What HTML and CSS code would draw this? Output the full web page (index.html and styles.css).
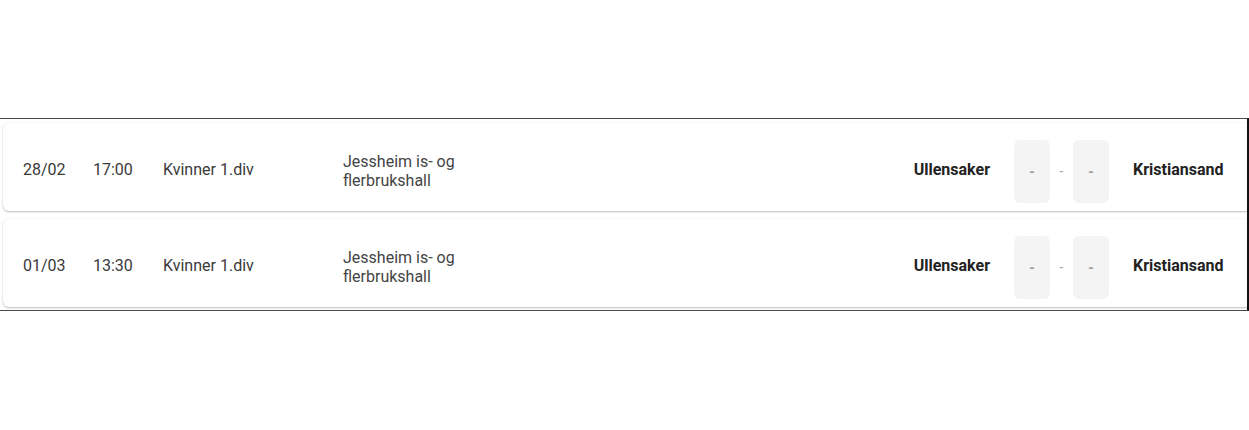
FILE: index.html
```html
<!DOCTYPE html>
<html lang="no">
<head>
<meta charset="utf-8">
<title>Kamper</title>
<link rel="stylesheet" href="styles.css">
</head>
<body>
<div class="frame">
  <div class="list">
    <div class="match">
      <div class="date">28/02</div>
      <div class="time">17:00</div>
      <div class="league">Kvinner 1.div</div>
      <div class="venue">Jessheim is- og<br>flerbrukshall</div>
      <div class="home">Ullensaker</div>
      <div class="score">
        <div class="box">-</div>
        <div class="sep">-</div>
        <div class="box">-</div>
      </div>
      <div class="away">Kristiansand</div>
    </div>
    <div class="match">
      <div class="date">01/03</div>
      <div class="time">13:30</div>
      <div class="league">Kvinner 1.div</div>
      <div class="venue">Jessheim is- og<br>flerbrukshall</div>
      <div class="home">Ullensaker</div>
      <div class="score">
        <div class="box">-</div>
        <div class="sep">-</div>
        <div class="box">-</div>
      </div>
      <div class="away">Kristiansand</div>
    </div>
  </div>
</div>
</body>
</html>
```
FILE: styles.css
```css
html, body {
  margin: 0;
  padding: 0;
  background: #fff;
}
body {
  font-family: Roboto, "Liberation Sans", sans-serif;
  color: #3a3a3a;
}
.frame {
  margin-top: 118px;
  width: 1247px;
  height: 191px;
  border-top: 1px solid #4a4a4a;
  border-bottom: 1px solid #4a4a4a;
  border-right: 2px solid #111;
  overflow: hidden;
}
.list {
  display: flex;
  flex-direction: column;
  gap: 8px;
  padding: 4px 0 0 3px;
  width: 1262px;
}
.match {
  display: flex;
  align-items: center;
  height: 88px;
  background: #fff;
  border-radius: 6px;
  box-shadow: 0 1px 2px rgba(0,0,0,0.25), 0 0 1px rgba(0,0,0,0.12);
  padding: 0 20px;
  font-size: 16px;
  box-sizing: border-box;
}
.date,
.time,
.league,
.home,
.away {
  padding-top: 4px;
}
.date {
  width: 70px;
}
.time {
  width: 70px;
}
.league {
  width: 180px;
}
.venue {
  flex: 1;
  line-height: 19px;
  padding-top: 7px;
  color: #444;
}
.home {
  font-weight: bold;
  color: #222;
  text-align: right;
}
.score {
  display: flex;
  align-items: center;
  margin: 8px 24px 0;
}
.box {
  width: 36px;
  height: 63px;
  background: #f4f4f4;
  border-radius: 6px;
  display: flex;
  align-items: center;
  justify-content: center;
  color: #999;
  font-size: 14px;
  font-weight: bold;
  padding-top: 2px;
  box-sizing: border-box;
}
.sep {
  width: 23px;
  text-align: center;
  color: #a8a8a8;
  font-size: 14px;
}
.away {
  width: 112px;
  font-weight: bold;
  color: #222;
}
```
